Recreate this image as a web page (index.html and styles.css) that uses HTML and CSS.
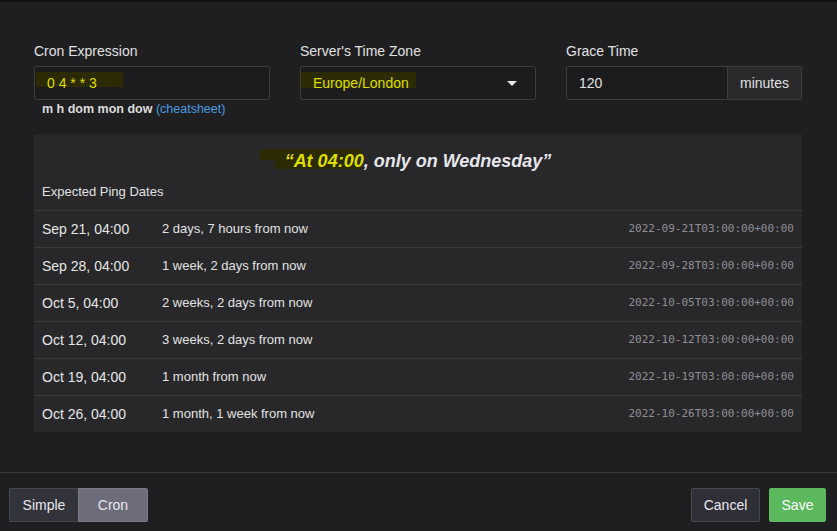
FILE: index.html
```html
<!DOCTYPE html>
<html>
<head>
<meta charset="utf-8">
<link rel="stylesheet" href="styles.css">
</head>
<body>
<div class="modal">
  <div class="modal-body">
    <div class="fields">
      <div class="field">
        <label class="label">Cron Expression</label>
        <div class="input hl-wrap">
          <span class="mark mark-cron"></span>
          <span class="yellow">0 4 * * 3</span>
        </div>
        <div class="help">m h dom mon dow <a class="link">(cheatsheet)</a></div>
      </div>
      <div class="field">
        <label class="label">Server's Time Zone</label>
        <div class="input select hl-wrap">
          <span class="mark mark-tz"></span>
          <span class="yellow">Europe/London</span>
          <span class="caret"></span>
        </div>
      </div>
      <div class="field">
        <label class="label">Grace Time</label>
        <div class="group">
          <div class="input grow">120</div>
          <div class="addon">minutes</div>
        </div>
      </div>
    </div>

    <div class="panel">
      <div class="desc hl-wrap">
        <span class="mark mark-desc"></span>
        <span class="mark mark-desc2"></span>
        <span class="desc-text"><span class="yellow">“At 04:00</span>, only on Wednesday”</span>
      </div>
      <div class="sub">Expected Ping Dates</div>
      <div class="rows">
        <div class="row"><span class="date">Sep 21, 04:00</span><span class="rel">2 days, 7 hours from now</span><span class="iso">2022-09-21T03:00:00+00:00</span></div>
        <div class="row"><span class="date">Sep 28, 04:00</span><span class="rel">1 week, 2 days from now</span><span class="iso">2022-09-28T03:00:00+00:00</span></div>
        <div class="row"><span class="date">Oct 5, 04:00</span><span class="rel">2 weeks, 2 days from now</span><span class="iso">2022-10-05T03:00:00+00:00</span></div>
        <div class="row"><span class="date">Oct 12, 04:00</span><span class="rel">3 weeks, 2 days from now</span><span class="iso">2022-10-12T03:00:00+00:00</span></div>
        <div class="row"><span class="date">Oct 19, 04:00</span><span class="rel">1 month from now</span><span class="iso">2022-10-19T03:00:00+00:00</span></div>
        <div class="row"><span class="date">Oct 26, 04:00</span><span class="rel">1 month, 1 week from now</span><span class="iso">2022-10-26T03:00:00+00:00</span></div>
      </div>
    </div>
  </div>
  <div class="modal-footer">
    <div class="toggle">
      <button class="btn btn-toggle">Simple</button>
      <button class="btn btn-toggle active">Cron</button>
    </div>
    <div class="actions">
      <button class="btn btn-default">Cancel</button>
      <button class="btn btn-save">Save</button>
    </div>
  </div>
</div>
</body>
</html>
```

FILE: styles.css
```css
* { box-sizing: border-box; }
html, body { margin: 0; padding: 0; }
body {
  background: #1f1f21;
  font-family: "Liberation Sans", Arial, sans-serif;
  color: #e2e2e2;
  width: 837px;
  height: 531px;
  overflow: hidden;
}
.modal {
  border-top: 2px solid #111113;
  height: 531px;
  display: flex;
  flex-direction: column;
}
.modal-body {
  padding: 39px 35px 0 34px;
  height: 471px;
  flex: none;
  border-bottom: 1px solid #38383b;
}
.fields {
  display: grid;
  grid-template-columns: 236px 236px 236px;
  column-gap: 30px;
}
.label {
  display: block;
  font-size: 14px;
  line-height: 20px;
  margin-bottom: 5px;
  color: #e0e0e0;
}
.input {
  height: 34px;
  border: 1px solid #3d3d40;
  border-radius: 2px;
  background: #1c1c1e;
  font-size: 14px;
  line-height: 32px;
  padding: 0 12px;
  color: #e0e0e0;
}
.hl-wrap { position: relative; }
.hl-wrap > span { position: relative; }
.mark {
  position: absolute !important;
  background: #2b2a02;
}
.mark-cron { left: 1px; top: 5px; width: 87px; height: 15px; }
.yellow { color: #dede00; }
.select { display: flex; align-items: center; justify-content: space-between; padding-right: 18px; }
.mark-tz { left: 0; top: 5px; width: 115px; height: 16px; }
.caret {
  width: 0; height: 0;
  border-left: 5px solid transparent;
  border-right: 5px solid transparent;
  border-top: 5px solid #e8e8e8;
}
.group { display: flex; }
.grow { flex: 1; border-radius: 2px 0 0 2px; }
.addon {
  height: 34px;
  border: 1px solid #3d3d40;
  border-left: none;
  border-radius: 0 2px 2px 0;
  background: #2a2a2d;
  font-size: 14px;
  line-height: 32px;
  padding: 0 12px;
  color: #e0e0e0;
}
.help {
  font-size: 12.5px;
  font-weight: bold;
  line-height: 16px;
  margin-top: 1px;
  padding-left: 8px;
  color: #dcdcdc;
}
.link { color: #4a9be0; font-weight: normal; }

.panel {
  margin-top: 17px;
  background: #28282b;
  padding-top: 15px;
}
.desc {
  text-align: center;
  font-size: 18px;
  font-weight: bold;
  font-style: italic;
  line-height: 24px;
  color: #e6e6ea;
  margin-bottom: 10px;
}
.mark-desc { left: 226px; top: 0; width: 102px; height: 11px; }
.mark-desc2 { left: 241px; top: 11px; width: 87px; height: 9px; }
.sub {
  font-size: 13px;
  line-height: 18px;
  padding: 0 8px 9px;
  color: #e0e0e0;
}
.row {
  display: flex;
  align-items: center;
  height: 37px;
  border-top: 1px solid #3a3a3d;
  padding: 0 8px;
}
.date { width: 120px; font-size: 14px; color: #e6e6e6; }
.rel { flex: 1; font-size: 13px; color: #e2e2e2; margin-top: -2px; }
.iso {
  font-family: "DejaVu Sans Mono", monospace;
  font-size: 11px;
  color: #8e8e94;
  margin-top: -2px;
}

.modal-footer {
  display: flex;
  justify-content: space-between;
  padding: 15px 11px 0 9px;
}
.toggle { display: flex; }
.actions { display: flex; gap: 9px; }
.btn {
  height: 34px;
  font-family: "Liberation Sans", Arial, sans-serif;
  font-size: 14px;
  color: #e8e8ee;
  border-radius: 2px;
  padding: 0 13px;
  cursor: pointer;
}
.btn-toggle {
  background: #33333b;
  border: 1px solid #46464e;
  width: 69px;
  padding: 0;
}
.btn-toggle:first-child { border-radius: 2px 0 0 2px; border-right: none; }
.btn-toggle.active {
  background: #6d6c7a;
  border: 1px solid #7c7b88;
  border-radius: 0 2px 2px 0;
  width: 70px;
}
.btn-default {
  background: #2f2f37;
  border: 1px solid #47474f;
  width: 69px;
  padding: 0;
}
.btn-save {
  background: #5cb85c;
  border: 1px solid #5cb85c;
  color: #fff;
  width: 57px;
  padding: 0;
}
```
